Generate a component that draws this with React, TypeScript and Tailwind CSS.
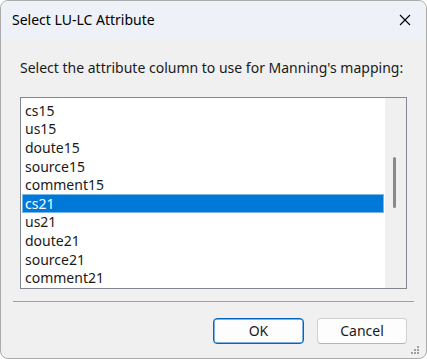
import React from "react";

const items = [
  "cs15",
  "us15",
  "doute15",
  "source15",
  "comment15",
  "cs21",
  "us21",
  "doute21",
  "source21",
  "comment21",
];

const font = { fontFamily: '"Segoe UI", "Noto Sans", sans-serif' };

export default function App() {
  const selected = "cs21";

  return (
    <div className="w-[427px] h-[359px] bg-white" style={font}>
      <div className="w-full h-full flex flex-col rounded-[8px] border border-[#ababab] bg-[#f0f0f0] overflow-hidden text-[14px] text-black">
        {/* title bar */}
        <div className="h-[38px] shrink-0 flex items-center justify-between pl-[11px] pr-[15px] bg-[#eff1f8]">
          <span className="leading-5">Select LU-LC Attribute</span>
          <svg width="12" height="12" viewBox="0 0 12 12" className="text-black">
            <path d="M1 1 L11 11 M11 1 L1 11" stroke="currentColor" strokeWidth="1.1" fill="none" />
          </svg>
        </div>

        <div className="flex flex-col px-[19px] pt-[19px]">
          <p className="h-5 leading-5 whitespace-nowrap text-[#1a1a1a]">
            Select the attribute column to use for Manning's mapping:
          </p>

          {/* list box */}
          <div className="mt-[19px] h-[192px] shrink-0 flex border border-[#828790] bg-white overflow-hidden">
            <div className="flex-1 flex flex-col pt-[3px] pl-px pr-[1px]">
              {items.map((it) =>
                it === selected ? (
                  <div
                    key={it}
                    className="h-[18.6px] shrink-0 flex items-center pl-[3px] bg-[#0078d7] text-white outline outline-1 -outline-offset-1 outline-[#7ab6e6]"
                  >
                    {it}
                  </div>
                ) : (
                  <div key={it} className="h-[18.6px] shrink-0 flex items-center pl-[3px] text-[#1a1a1a]">
                    {it}
                  </div>
                )
              )}
            </div>
            <div className="w-[21px] shrink-0 bg-[#f0f0f0] relative">
              <div className="absolute left-[8px] top-[59px] w-[3px] h-[51px] rounded-full bg-[#8a8a8a]" />
            </div>
          </div>
        </div>

        <div className="mx-[12px] mt-[12px] h-px shrink-0 bg-[#a0a0a0]" />

        <div className="flex justify-end gap-[13px] pr-[19px] pt-[16px]">
          <button className="w-[91px] h-[26px] rounded-[4px] border border-[#0067c0] bg-[#fdfdfd] text-[14px] leading-none text-[#1a1a1a] shadow-[inset_0_0_0_0.5px_#0067c0]">
            OK
          </button>
          <button className="w-[90px] h-[26px] rounded-[4px] border border-[#d0d0d0] border-b-[#b5b5b5] bg-[#fdfdfd] text-[14px] leading-none text-[#1a1a1a]">
            Cancel
          </button>
        </div>

        <div className="flex-1 flex items-end justify-end pr-[6px] pb-[3px]">
          <svg width="10" height="10" viewBox="0 0 10 10">
            <g fill="#a0a0a0">
              <rect x="7" y="1" width="2" height="2" />
              <rect x="4" y="4" width="2" height="2" />
              <rect x="7" y="4" width="2" height="2" />
              <rect x="1" y="7" width="2" height="2" />
              <rect x="4" y="7" width="2" height="2" />
              <rect x="7" y="7" width="2" height="2" />
            </g>
          </svg>
        </div>
      </div>
    </div>
  );
}
